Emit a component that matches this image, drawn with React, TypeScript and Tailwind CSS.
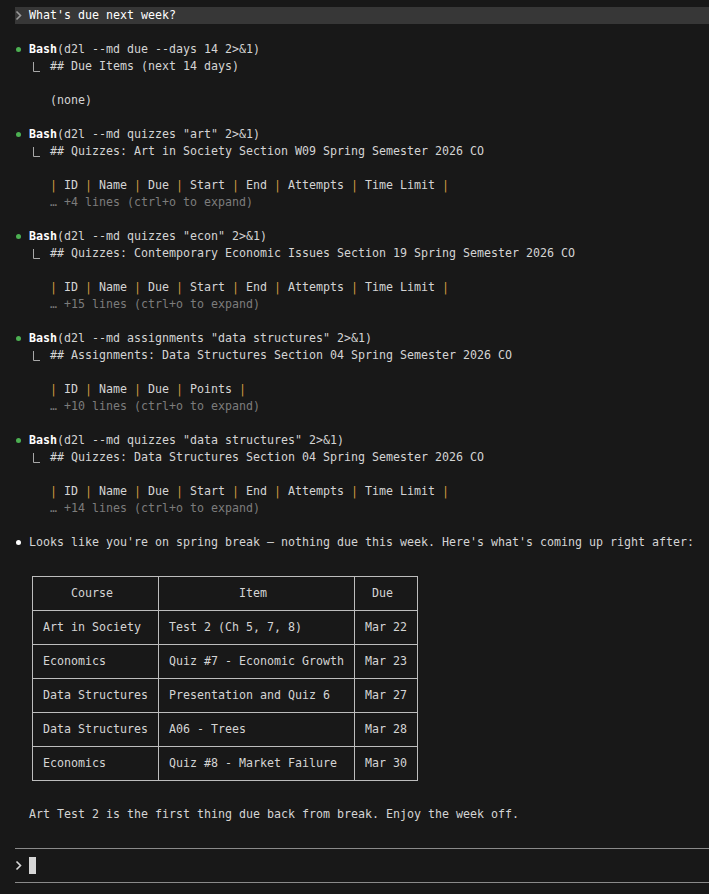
import React from "react";

// terminal transcript: each line is 17px tall, each column 7px wide

type Block = {
  cmd: string;
  head: string;
  body: string;
  more?: string;
};

const blocks: Block[] = [
  { cmd: "(d2l --md due --days 14 2>&1)", head: "## Due Items (next 14 days)", body: "(none)" },
  {
    cmd: '(d2l --md quizzes "art" 2>&1)',
    head: "## Quizzes: Art in Society Section W09 Spring Semester 2026 CO",
    body: "| ID | Name | Due | Start | End | Attempts | Time Limit |",
    more: "… +4 lines (ctrl+o to expand)",
  },
  {
    cmd: '(d2l --md quizzes "econ" 2>&1)',
    head: "## Quizzes: Contemporary Economic Issues Section 19 Spring Semester 2026 CO",
    body: "| ID | Name | Due | Start | End | Attempts | Time Limit |",
    more: "… +15 lines (ctrl+o to expand)",
  },
  {
    cmd: '(d2l --md assignments "data structures" 2>&1)',
    head: "## Assignments: Data Structures Section 04 Spring Semester 2026 CO",
    body: "| ID | Name | Due | Points |",
    more: "… +10 lines (ctrl+o to expand)",
  },
  {
    cmd: '(d2l --md quizzes "data structures" 2>&1)',
    head: "## Quizzes: Data Structures Section 04 Spring Semester 2026 CO",
    body: "| ID | Name | Due | Start | End | Attempts | Time Limit |",
    more: "… +14 lines (ctrl+o to expand)",
  },
];

const rows = [
  ["Art in Society", "Test 2 (Ch 5, 7, 8)", "Mar 22"],
  ["Economics", "Quiz #7 - Economic Growth", "Mar 23"],
  ["Data Structures", "Presentation and Quiz 6", "Mar 27"],
  ["Data Structures", "A06 - Trees", "Mar 28"],
  ["Economics", "Quiz #8 - Market Failure", "Mar 30"],
];

function Line({ children }: { children?: React.ReactNode }) {
  return <div className="flex h-[17px] items-center whitespace-pre">{children}</div>;
}

function Dot({ color }: { color: string }) {
  return (
    <span className="inline-flex h-[17px] w-[14px] items-center">
      <span className={`ml-[1px] h-[5px] w-[5px] rounded-full ${color}`} />
    </span>
  );
}

function Chevron({ color }: { color: string }) {
  return (
    <svg width="14" height="17" className="shrink-0">
      <path d="M1.5 4.5L5.5 8.5L1.5 12.5" fill="none" stroke={color} strokeWidth="1.6" />
    </svg>
  );
}

function Elbow() {
  return (
    <svg width="7" height="17" className="overflow-visible">
      <path d="M4.5 4V13.5H11" fill="none" stroke="#a8a8a8" strokeWidth="1" />
    </svg>
  );
}

function Pipes({ text }: { text: string }) {
  const parts = text.split("|");
  return (
    <span>
      {parts.map((p, i) => (
        <React.Fragment key={i}>
          {i > 0 && <span className="text-[#cf9a3f]">|</span>}
          <span>{p}</span>
        </React.Fragment>
      ))}
    </span>
  );
}

function Divider() {
  return (
    <div className="flex h-[17px] items-center">
      <div className="h-px w-full bg-[#8a8a8a]" />
    </div>
  );
}

export default function App() {
  return (
    <div className="h-screen overflow-hidden bg-[#181818] pt-[7px] pl-[15px] font-['DejaVu_Sans_Mono',monospace] text-[11.63px] leading-[17px] text-[#d4d4d4]">
      {/* user prompt */}
      <div className="flex h-[17px] items-center bg-[#373737] whitespace-pre">
        <Chevron color="#9a9a9a" />
        <span className="text-white">What's due next week?</span>
      </div>
      <Line />

      {blocks.map((b, i) => (
        <div key={i}>
          <Line>
            <Dot color="bg-[#4cb052]" />
            <span className="font-bold text-white">Bash</span>
            <span>{b.cmd}</span>
          </Line>
          <Line>
            <span>{"  "}</span>
            <Elbow />
            <span>{"  " + b.head}</span>
          </Line>
          <Line />
          <Line>
            <span>{"     "}</span>
            {b.body.startsWith("|") ? <Pipes text={b.body} /> : <span>{b.body}</span>}
          </Line>
          {b.more && (
            <Line>
              <span>{"     "}</span>
              <span className="text-[#7c7c7c]">{b.more}</span>
            </Line>
          )}
          <Line />
        </div>
      ))}

      <Line>
        <Dot color="bg-white" />
        <span>Looks like you're on spring break — nothing due this week. Here's what's coming up right after:</span>
      </Line>
      <Line />

      {/* summary table */}
      <div className="mt-[8px] ml-[17px] grid w-fit grid-cols-[126px_196px_63px] border-t border-l border-[#bdbdbd] whitespace-pre">
        <div className="flex h-[34px] items-center border-r border-b border-[#bdbdbd] pl-[38px]">Course</div>
        <div className="flex h-[34px] items-center border-r border-b border-[#bdbdbd] pl-[80px]">Item</div>
        <div className="flex h-[34px] items-center border-r border-b border-[#bdbdbd] pl-[17px]">Due</div>
        {rows.map((r, i) => (
          <React.Fragment key={i}>
            {r.map((c, j) => (
              <div key={j} className="flex h-[34px] items-center border-r border-b border-[#bdbdbd] pl-[10px]">
                {c}
              </div>
            ))}
          </React.Fragment>
        ))}
      </div>

      <div className="mt-[8px]">
        <Line />
        <Line>
          <span>{"  Art Test 2 is the first thing due back from break. Enjoy the week off."}</span>
        </Line>
        <Line />
        <Divider />
        <Line>
          <Chevron color="#d8d8d8" />
          <span className="h-[17px] w-[7px] bg-[#d6d6d6]" />
        </Line>
        <Divider />
      </div>
    </div>
  );
}
